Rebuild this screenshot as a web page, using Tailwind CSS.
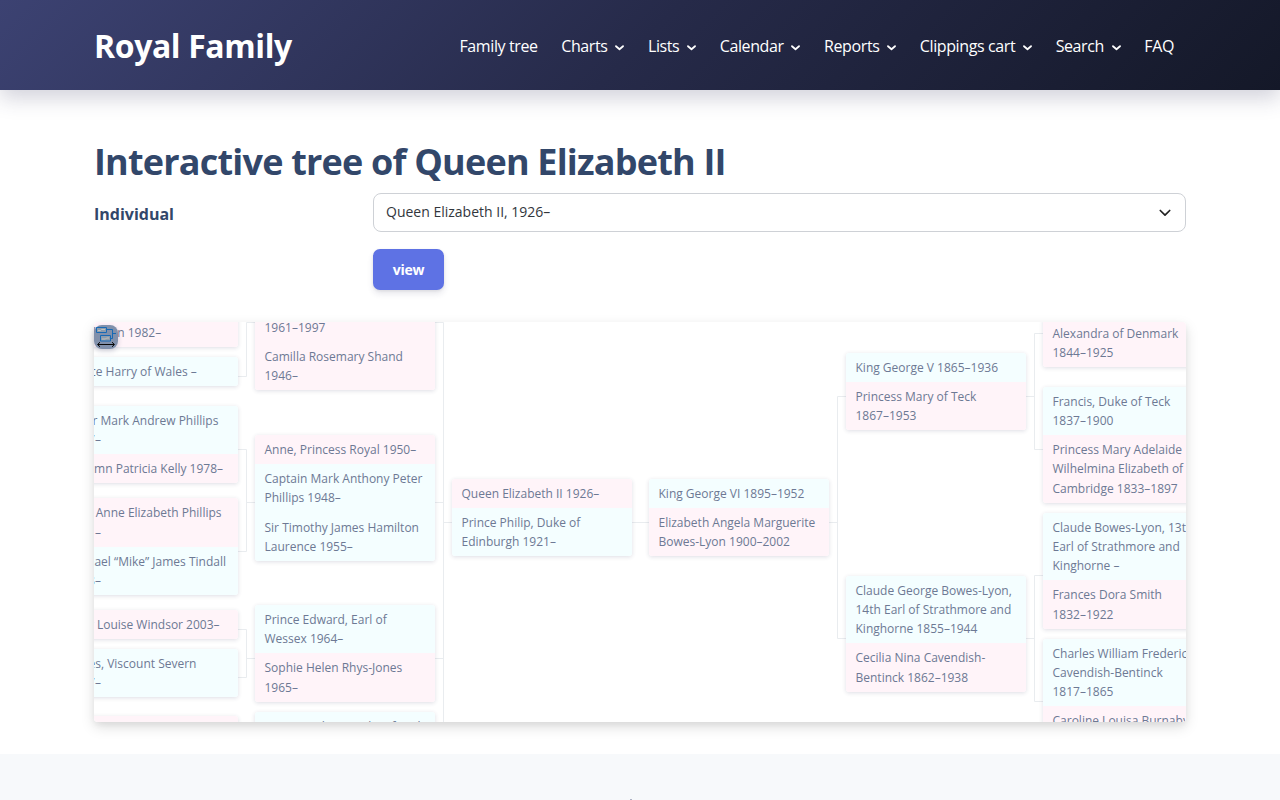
<!DOCTYPE html>
<html lang="en">
<head>
<meta charset="utf-8">
<title>Royal Family</title>
<script src="https://cdn.jsdelivr.net/npm/@tailwindcss/browser@4"></script>
</head>
<body class="bg-white h-[800px] overflow-hidden font-['Open_Sans','Noto_Sans',sans-serif] text-[#525f7f]">
<header class="h-[90px] bg-[linear-gradient(135deg,#3c4272_0%,#262a49_50%,#141828_100%)] shadow-[0_8px_20px_rgba(50,50,93,0.22)]">
  <div class="mx-[94px] h-full pt-[2px] flex items-center justify-between text-white">
    <div class="text-[32px] font-bold leading-[48px] tracking-[-0.4px]">Royal Family</div>
    <nav class="flex items-center gap-[23.6px] text-[16px] leading-6 pr-3 pb-px tracking-[-0.39px] whitespace-nowrap">
      <a>Family tree</a>
      <a class="flex items-center gap-[7.8px]">Charts<svg class="w-[9px] h-[6px] mt-1" viewBox="0 0 9 6" fill="none" stroke="white" stroke-width="1.8" stroke-linecap="round" stroke-linejoin="round"><path d="M1 1.2 4.5 4.2 8 1.2"/></svg></a>
      <a class="flex items-center gap-[7.8px]">Lists<svg class="w-[9px] h-[6px] mt-1" viewBox="0 0 9 6" fill="none" stroke="white" stroke-width="1.8" stroke-linecap="round" stroke-linejoin="round"><path d="M1 1.2 4.5 4.2 8 1.2"/></svg></a>
      <a class="flex items-center gap-[7.8px]">Calendar<svg class="w-[9px] h-[6px] mt-1" viewBox="0 0 9 6" fill="none" stroke="white" stroke-width="1.8" stroke-linecap="round" stroke-linejoin="round"><path d="M1 1.2 4.5 4.2 8 1.2"/></svg></a>
      <a class="flex items-center gap-[7.8px]">Reports<svg class="w-[9px] h-[6px] mt-1" viewBox="0 0 9 6" fill="none" stroke="white" stroke-width="1.8" stroke-linecap="round" stroke-linejoin="round"><path d="M1 1.2 4.5 4.2 8 1.2"/></svg></a>
      <a class="flex items-center gap-[7.8px]">Clippings cart<svg class="w-[9px] h-[6px] mt-1" viewBox="0 0 9 6" fill="none" stroke="white" stroke-width="1.8" stroke-linecap="round" stroke-linejoin="round"><path d="M1 1.2 4.5 4.2 8 1.2"/></svg></a>
      <a class="flex items-center gap-[7.8px]">Search<svg class="w-[9px] h-[6px] mt-1" viewBox="0 0 9 6" fill="none" stroke="white" stroke-width="1.8" stroke-linecap="round" stroke-linejoin="round"><path d="M1 1.2 4.5 4.2 8 1.2"/></svg></a>
      <a>FAQ</a>
    </nav>
  </div>
</header>
<main class="mx-[94px] pt-12 h-[664px]">
  <h1 class="text-[36px] font-bold leading-[47px] text-[#32476a] tracking-[-0.8px]">Interactive tree of Queen Elizabeth II</h1>
  <form class="grid grid-cols-[279px_1fr] mt-2">
    <label class="text-[16px] font-bold leading-6 text-[#32476a] pt-[9px]">Individual</label>
    <div class="h-[39px] flex items-center justify-between rounded-lg border border-[#ced1d6] px-3 pr-[14px] text-[14px] text-[#32363c]">
      <span class="pb-[3px]">Queen Elizabeth II, 1926–</span>
      <svg class="w-3 h-2" viewBox="0 0 12 8" fill="none" stroke="#222" stroke-width="1.7" stroke-linecap="round" stroke-linejoin="round"><path d="M1.3 1.5 6 6.2 10.7 1.5"/></svg>
    </div>
    <div class="col-start-2 mt-[17px]"><button type="button" class="w-[71px] h-[41px] rounded-[7px] bg-[#5e72e4] text-white text-[14px] font-bold tracking-[-0.2px] shadow-[0_4px_6px_rgba(50,50,93,0.11),0_1px_3px_rgba(0,0,0,0.08)]">view</button></div>
  </form>
  <section class="relative mt-8 h-[400px] rounded shadow-[0_5px_14px_rgba(0,0,0,0.13),0_3px_6px_rgba(0,0,0,0.05)]">
    <div id="tree" class="absolute inset-0 overflow-hidden rounded bg-white text-[12px] leading-[19.2px] text-[#6d7994]">
      <svg class="absolute inset-0" width="1092" height="400" fill="none" stroke="#e9ecef" stroke-width="1"><path d="M144 54.5H152.500V.5H161M144 127.5H152.500V229.500H144M152.500 180.500H161M144 307.500H152.500V355.500H144M152.500 336.500H161M341 .5H349.500V400M341 180.500H349.500M341 336.500H349.500M349.500 200.500H358M538 200.500H555M735 200.500H743.500M752 74.500H743.500V316.500H752M932 74.500H940.500M949 11.500H940.500V127.500H949M932 316.500H940.500M949 253.500H940.500V379.500H949"/></svg>
    </div>
    <div class="absolute left-0 top-[3px] size-6 rounded-[8px] bg-[#8090ab] shadow-[0_2px_5px_rgba(50,50,93,0.22)]">
      <svg width="24" height="24" viewBox="0 0 24 24" fill="none"><path d="M12.500 4.500H18.500V13.500H16.500M18.500 8.500H22" stroke="#1769b5"/><path d="M2.500 2.500H12.500V7.500H2.500ZM6.500 10.500H16.500V16H6.500Z" fill="#8d9cad" stroke="#1769b5"/><path d="M4 5.500H6.500L7.500 4.500H11M8 14H11.500L12.500 13H15" stroke="#bfc1bb"/><path d="M4 19.500H20M6 17.200 3.500 19.500 6 21.800M18 17.200 20.500 19.500 18 21.800" stroke="#080808" stroke-width="1"/></svg>
    </div>
  </section>
</main>
<footer class="h-12 bg-[#f7f9fb] flex justify-center overflow-hidden"><span class="mt-[45px] -ml-[18px] w-[2px] h-[3px] bg-[#adb2c4]"></span></footer>
<script>
const M='bg-[#f4feff]', F='bg-[#fff4f9]';
// Each node: left, top, then groups of [background, person, person...]; "|" breaks a line.
const nodes=[
[-36,-23.2,[F,'Catherine Elizabeth|Middleton 1982–']],
[-36,35,[M,'Prince Harry of Wales –']],
[-36,83.6,[M,'Peter Mark Andrew Phillips|1977–'],[F,'Autumn Patricia Kelly 1978–']],
[-36,176.4,[F,'Zara Anne Elizabeth Phillips|1981–'],[M,'Michael “Mike” James Tindall|1978–']],
[-36,287.6,[F,'Lady Louise Windsor 2003–']],
[-36,327,[M,'James, Viscount Severn|2007–']],
[-36,394,[F,'Princess Beatrice of York|1988–']],
[161,-28.4,[F,'Lady Diana Frances Spencer|1961–1997','Camilla Rosemary Shand|1946–']],
[161,112.9,[F,'Anne, Princess Royal 1950–'],[M,'Captain Mark Anthony Peter|Phillips 1948–','Sir Timothy James Hamilton|Laurence 1955–']],
[161,283,[M,'Prince Edward, Earl of|Wessex 1964–'],[F,'Sophie Helen Rhys-Jones|1965–']],
[161,390.3,[M,'Prince Andrew, Duke of York|1960–']],
[358,156.6,[F,'Queen Elizabeth II 1926–'],[M,'Prince Philip, Duke of|Edinburgh 1921–']],
[555,156.6,[M,'King George VI 1895–1952'],[F,'Elizabeth Angela Marguerite|Bowes-Lyon 1900–2002']],
[752,30.6,[M,'King George V 1865–1936'],[F,'Princess Mary of Teck|1867–1953']],
[752,253.8,[M,'Claude George Bowes-Lyon,|14th Earl of Strathmore and|Kinghorne 1855–1944'],[F,'Cecilia Nina Cavendish-|Bentinck 1862–1938']],
[949,-3.4,[F,'Alexandra of Denmark|1844–1925']],
[949,64.8,[M,'Francis, Duke of Teck|1837–1900'],[F,'Princess Mary Adelaide|Wilhelmina Elizabeth of|Cambridge 1833–1897']],
[949,190.8,[M,'Claude Bowes-Lyon, 13th|Earl of Strathmore and|Kinghorne –'],[F,'Frances Dora Smith|1832–1922']],
[949,316.8,[M,'Charles William Frederick|Cavendish-Bentinck|1817–1865'],[F,'Caroline Louisa Burnaby|1832–1918']]
];
const tree=document.getElementById('tree');
for(const [x,y,...groups] of nodes){
  const n=document.createElement('div');
  n.className='absolute w-[180.8px] rounded-[3px] overflow-hidden whitespace-nowrap shadow-[0_1px_4px_rgba(50,50,93,0.16)]';
  n.style.left=(x-0.5)+'px'; n.style.top=y+'px';
  for(const [c,...people] of groups) for(const p of people){
    const d=document.createElement('div'); d.className=c+' px-2.5 py-[5px]';
    p.split('|').forEach((t,i)=>{ if(i) d.append(document.createElement('br')); d.append(t); });
    n.append(d);
  }
  tree.append(n);
}
</script>
</body>
</html>
